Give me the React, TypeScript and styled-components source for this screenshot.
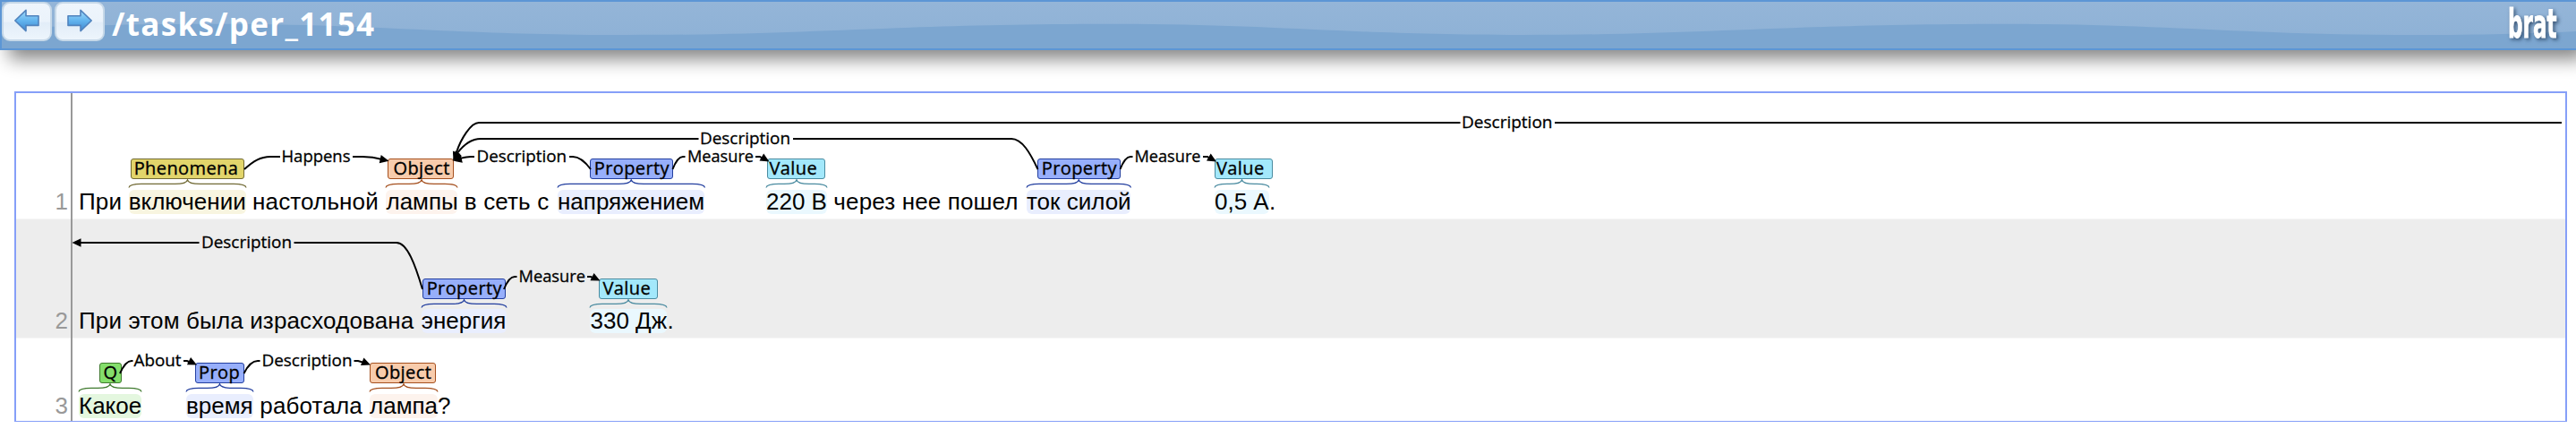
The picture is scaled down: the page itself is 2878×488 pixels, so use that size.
import React from "react";
import styled, { createGlobalStyle } from "styled-components";

const GlobalStyle = createGlobalStyle`
  * { box-sizing: border-box; }
  html, body { margin: 0; background: #fff; }
  body { height: 488px; overflow: hidden; }
`;

const labelFont = `"Open Sans", "Noto Sans", sans-serif`;
const textFont = `"Liberation Sans", Arial, sans-serif`;

/* ---------- header ---------- */

const Header = styled.header`
  position: relative;
  height: 56px;
  border: 2px solid #5c96d5;
  border-right: 0;
  background: #7ca6d0;
  box-shadow: 10px 10px 20px #868686;
  display: flex;
  align-items: flex-start;
  gap: 3px;
`;

const Gloss = styled.svg`
  position: absolute;
  inset: 0;
  width: 2876px;
  height: 52px;
`;

const NavButton = styled.button`
  position: relative;
  width: 56px;
  height: 44px;
  padding: 0;
  border: 2px solid #c6d8e8;
  border-radius: 9px;
  background: linear-gradient(#eef5fc 0%, #ebf3fb 50%, #e2edf8 54%, #edf5fc 100%);
  display: flex;
  align-items: center;
  justify-content: center;
`;

const Title = styled.h1`
  position: relative;
  margin: 0 auto 0 5px;
  font: 700 35px/49px ${labelFont};
  letter-spacing: 1.3px;
  color: #fff;
  white-space: pre;
`;

const Logo = styled.svg`
  position: relative;
  overflow: visible;
  filter: drop-shadow(2px 2px 2px rgba(30, 55, 85, 0.75));
  text {
    font: 700 44px "DejaVu Sans Condensed", "DejaVu Sans", sans-serif;
    fill: #fff;
    stroke: #fff;
    stroke-width: 0.8;
  }
`;

/* ---------- document ---------- */

const Document = styled.main`
  margin: 46px 10px 0 16px;
  width: 2852px;
  height: 369px;
  border: 2px solid #869ff8;
  border-bottom-width: 1px;
`;

const Sentence = styled.section<{ $height: number; $bottom: number; $shaded?: boolean }>`
  position: relative;
  height: ${(p) => p.$height}px;
  padding-bottom: ${(p) => p.$bottom}px;
  background: ${(p) => (p.$shaded ? "#ededed" : "#fff")};
  box-shadow: ${(p) => (p.$shaded ? "inset 0 1px #f6f6f6, inset 0 -1px #f6f6f6" : "none")};
  display: flex;
  align-items: flex-end;
`;

const LineNumber = styled.span`
  width: 58px;
  text-align: right;
  font: 26px/28px ${textFont};
  color: #999;
`;

const Words = styled.div`
  margin-left: 12px;
  display: flex;
  align-items: flex-end;
  font: 26px/28px ${textFont};
  letter-spacing: 0.14px;
  color: #000;
  white-space: pre;
`;

const Plain = styled.span<{ $width?: number }>`
  width: ${(p) => (p.$width ? `${p.$width}px` : "auto")};
`;

const MentionBox = styled.span<{ $before: number }>`
  margin-left: ${(p) => p.$before}px;
  display: flex;
  flex-direction: column;
  align-items: center;
`;

const Tag = styled.span<{ $width: number; $inset: number; $fill: string; $line: string; $shift: number }>`
  align-self: center;
  position: relative;
  left: ${(p) => p.$shift}px;
  width: ${(p) => p.$width}px;
  height: 23px;
  margin: 0 -20px;
  padding-left: ${(p) => p.$inset}px;
  border: 1.5px solid ${(p) => p.$line};
  border-radius: 3px;
  background: ${(p) => p.$fill};
  font: 400 20px/19px ${labelFont};
  letter-spacing: 0.4px;
  -webkit-text-stroke: 0.35px #000;
`;

const BraceMark = styled.svg<{ $gap: number }>`
  display: block;
  margin: 1px 0 ${(p) => p.$gap}px;
  overflow: visible;
`;

const Highlight = styled.span<{ $tint: string; $width: number }>`
  width: ${(p) => p.$width}px;
  height: 27px;
  border-radius: 6px;
  background: ${(p) => p.$tint};
  line-height: 26px;
  letter-spacing: 0;
`;

const Rule = styled.i`
  position: absolute;
  left: 61px;
  top: 0;
  bottom: 0;
  width: 2px;
  background: #999;
`;

const ArcLayer = styled.svg`
  position: absolute;
  left: 0;
  top: 0;
  overflow: visible;
  path {
    fill: none;
    stroke: #000;
    stroke-width: 2;
  }
  polygon {
    fill: #000;
  }
  text {
    font: 400 18px ${labelFont};
    stroke: #000;
    stroke-width: 0.3;
  }
`;

type Kind = "phenomena" | "object" | "property" | "value" | "question";

const palette: Record<Kind, { fill: string; line: string; tint: string }> = {
  phenomena: { fill: "#e2d56b", line: "#716a35", tint: "#f8f5e0" },
  object: { fill: "#f8ccac", line: "#a5501f", tint: "#fdf3ed" },
  property: { fill: "#97affb", line: "#233f9f", tint: "#e9eefe" },
  value: { fill: "#a3e8fb", line: "#4a8ba0", tint: "#eaf8fe" },
  question: { fill: "#84de6b", line: "#3f7a2e", tint: "#e4f7df" },
};

interface MentionProps {
  kind: Kind;
  label: string;
  text: string;
  width: number;
  tag: number;
  inset: number;
  before?: number;
  shift?: number;
  gap?: number;
}

function Mention({ kind, label, text, width, tag, inset, before = 0, shift = 0, gap = 2 }: MentionProps) {
  const c = palette[kind];
  const w = width;
  const m = w / 2;
  return (
    <MentionBox $before={before}>
      <Tag $width={tag} $inset={inset} $fill={c.fill} $line={c.line} $shift={shift}>
        {label}
      </Tag>
      <BraceMark width={w} height={9} $gap={gap}>
        <path
          d={`M0 8.5C0.5 5.5 5 4.4 14 4.4H${m - 14}C${m - 6} 4.4 ${m - 1} 3.6 ${m} 0C${m + 1} 3.6 ${m + 6} 4.4 ${m + 14} 4.4H${w - 14}C${w - 5} 4.4 ${w - 0.5} 5.5 ${w} 8.5`}
          fill="none"
          stroke={c.line}
          strokeWidth={1.3}
        />
      </BraceMark>
      <Highlight $tint={c.tint} $width={w}>
        {text}
      </Highlight>
    </MentionBox>
  );
}

interface ArcProps {
  label: string;
  x: number;
  width: number;
  y: number;
  left: string;
  right: string;
  /** arrow tip position and direction in degrees (0 points right) */
  tip?: [number, number, number];
}

function Arc({ label, x, width, y, left, right, tip }: ArcProps) {
  return (
    <g>
      <path d={left} />
      <path d={right} />
      {tip && <polygon points="0,0 -10,-4.7 -10,4.7" transform={`translate(${tip[0]} ${tip[1]}) rotate(${tip[2]})`} />}
      <text x={x} y={y + 6} textLength={width} lengthAdjust="spacingAndGlyphs">
        {label}
      </text>
    </g>
  );
}

function ArrowIcon({ flip = false }: { flip?: boolean }) {
  const id = flip ? "fwd" : "back";
  return (
    <svg width="30" height="28" viewBox="0 1 30 28">
      <defs>
        <linearGradient id={id} x1="0" y1="0" x2="0" y2="1">
          <stop offset="0" stopColor="#a4dcfb" />
          <stop offset="0.5" stopColor="#62b4ee" />
          <stop offset="1" stopColor="#3d86cf" />
        </linearGradient>
      </defs>
      <path
        transform={flip ? "translate(30 0) scale(-1 1)" : undefined}
        d="M1.8 14L14 2.4V8.8H28V19.4H14V25.6Z"
        fill={`url(#${id})`}
        stroke="#5183bd"
        strokeWidth="1.6"
        strokeLinejoin="round"
      />
    </svg>
  );
}

export default function App() {
  return (
    <>
      <GlobalStyle />
      <Header>
        <Gloss viewBox="2 2 2876 52">
          <defs>
            <linearGradient id="gloss" x1="0" y1="0" x2="0" y2="1">
              <stop offset="0" stopColor="#94b5d8" />
              <stop offset="1" stopColor="#8fb2d6" />
            </linearGradient>
          </defs>
          <path
            fill="url(#gloss)"
            d="M0 2V32C90 28 160 26.7 240 26.7C420 26.7 510 39 700 39C910 39 1000 26.7 1240 26.7C1420 26.7 1510 39 1700 39C1910 39 2000 26.7 2240 26.7C2420 26.7 2510 39 2700 39C2770 39 2830 37.5 2878 35V2Z"
          />
        </Gloss>
        <NavButton aria-label="Previous">
          <ArrowIcon />
        </NavButton>
        <NavButton aria-label="Next">
          <ArrowIcon flip />
        </NavButton>
        <Title>/tasks/per_1154</Title>
        <Logo width={76} height={52}>
          <text transform="translate(0 40) scale(0.585 1)">brat</text>
        </Logo>
      </Header>

      <Document>
        <Sentence $height={140} $bottom={5}>
          <LineNumber>1</LineNumber>
          <Words>
            <Plain $width={55.7}>При </Plain>
            <Mention kind="phenomena" label="Phenomena" text="включении" width={131} tag={127} inset={3} />
            <Plain $width={156.8}> настольной </Plain>
            <Mention kind="object" label="Object" text="лампы" width={80} tag={74} inset={5} shift={-1} />
            <Plain $width={111.5}> в сеть с </Plain>
            <Mention kind="property" label="Property" text="напряжением" width={164.5} tag={93} inset={4} />
            <Mention kind="value" label="Value" text="220 В" width={68} tag={65} inset={1} before={68.5} />
            <Plain $width={223}> через нее пошел </Plain>
            <Mention kind="property" label="Property" text="ток силой" width={116.5} tag={93} inset={4} />
            <Mention kind="value" label="Value" text="0,5 А" width={61} tag={65} inset={1} before={93.5} shift={2} />
            <Plain>.</Plain>
          </Words>
          <Rule />
          <ArcLayer width={2848} height={140} viewBox="18 104 2848 140">
            <Arc label="Happens" x={314.5} width={77} y={175} left="M273 189C283 180 291 175 302 175H313" right="M394 175H405C414 175 420 176 427 178" tip={[434.5, 179.7, 12]} />
            <Arc label="Description" x={532.5} width={100.5} y={175} left="M530 175H526C521 175 518 176 512 177.5" right="M636 175H640C648 175 654 181 660 189" tip={[506, 179.5, 167]} />
            <Arc label="Measure" x={768} width={74} y={175} left="M751.5 189C755 180 759 175 763 175H765.5" right="M844 175H849L852 177" tip={[859.5, 180.5, 30]} />
            <Arc label="Description" x={782} width={101} y={155} left="M780.5 155H537C526 155 517 163 511 171" right="M886 155H1130C1142 155 1151 171 1159.5 189" tip={[506, 179, 130]} />
            <Arc label="Description" x={1633} width={101.5} y={137} left="M1631.5 137H535C526 137 515 155 510 170" right="M1737 137H2862" tip={[506.5, 179.5, 112]} />
            <Arc label="Measure" x={1267.5} width={74} y={175} left="M1251.5 189C1255 180 1259 175 1263 175H1265.5" right="M1344 175H1349L1352 177" tip={[1359, 180.5, 30]} />
          </ArcLayer>
        </Sentence>

        <Sentence $height={134} $bottom={6} $shaded>
          <LineNumber>2</LineNumber>
          <Words>
            <Plain $width={382.7}>При этом была израсходована </Plain>
            <Mention kind="property" label="Property" text="энергия" width={95} tag={93} inset={4} gap={1} />
            <Mention kind="value" label="Value" text="330 Дж" width={86} tag={66} inset={3} before={93.8} gap={1} />
            <Plain>.</Plain>
          </Words>
          <Rule />
          <ArcLayer width={2848} height={134} viewBox="18 244 2848 134">
            <Arc label="Description" x={225} width={101} y={271} left="M222.5 271H88" right="M328.5 271H443C455 271 464 296 472 323" tip={[80.5, 271, 180]} />
            <Arc label="Measure" x={579.5} width={74.5} y={309} left="M563 323C567 313 571 309 575 309H577.5" right="M656 309H660L663 310.5" tip={[670.5, 313.5, 26]} />
          </ArcLayer>
        </Sentence>

        <Sentence $height={92} $bottom={3}>
          <LineNumber>3</LineNumber>
          <Words>
            <Mention kind="question" label="Q" text="Какое" width={70} tag={25} inset={4} />
            <Mention kind="property" label="Prop" text="время" width={75} tag={55} inset={3} before={50} />
            <Plain $width={130}> работала </Plain>
            <Mention kind="object" label="Object" text="лампа" width={76} tag={74} inset={5} shift={-1} />
            <Plain>?</Plain>
          </Words>
          <Rule />
          <ArcLayer width={2848} height={92} viewBox="18 378 2848 92">
            <Arc label="About" x={149.5} width={53} y={403} left="M134 417C138 408 142 403 147 403H148.5" right="M205 403H209L212 404.5" tip={[220, 407.5, 26]} />
            <Arc label="Description" x={292.5} width={101} y={403} left="M272.5 417C277 408 282 403 288 403H290.5" right="M395.5 403H400L405 404.5" tip={[414, 407.5, 22]} />
          </ArcLayer>
        </Sentence>
      </Document>
    </>
  );
}
